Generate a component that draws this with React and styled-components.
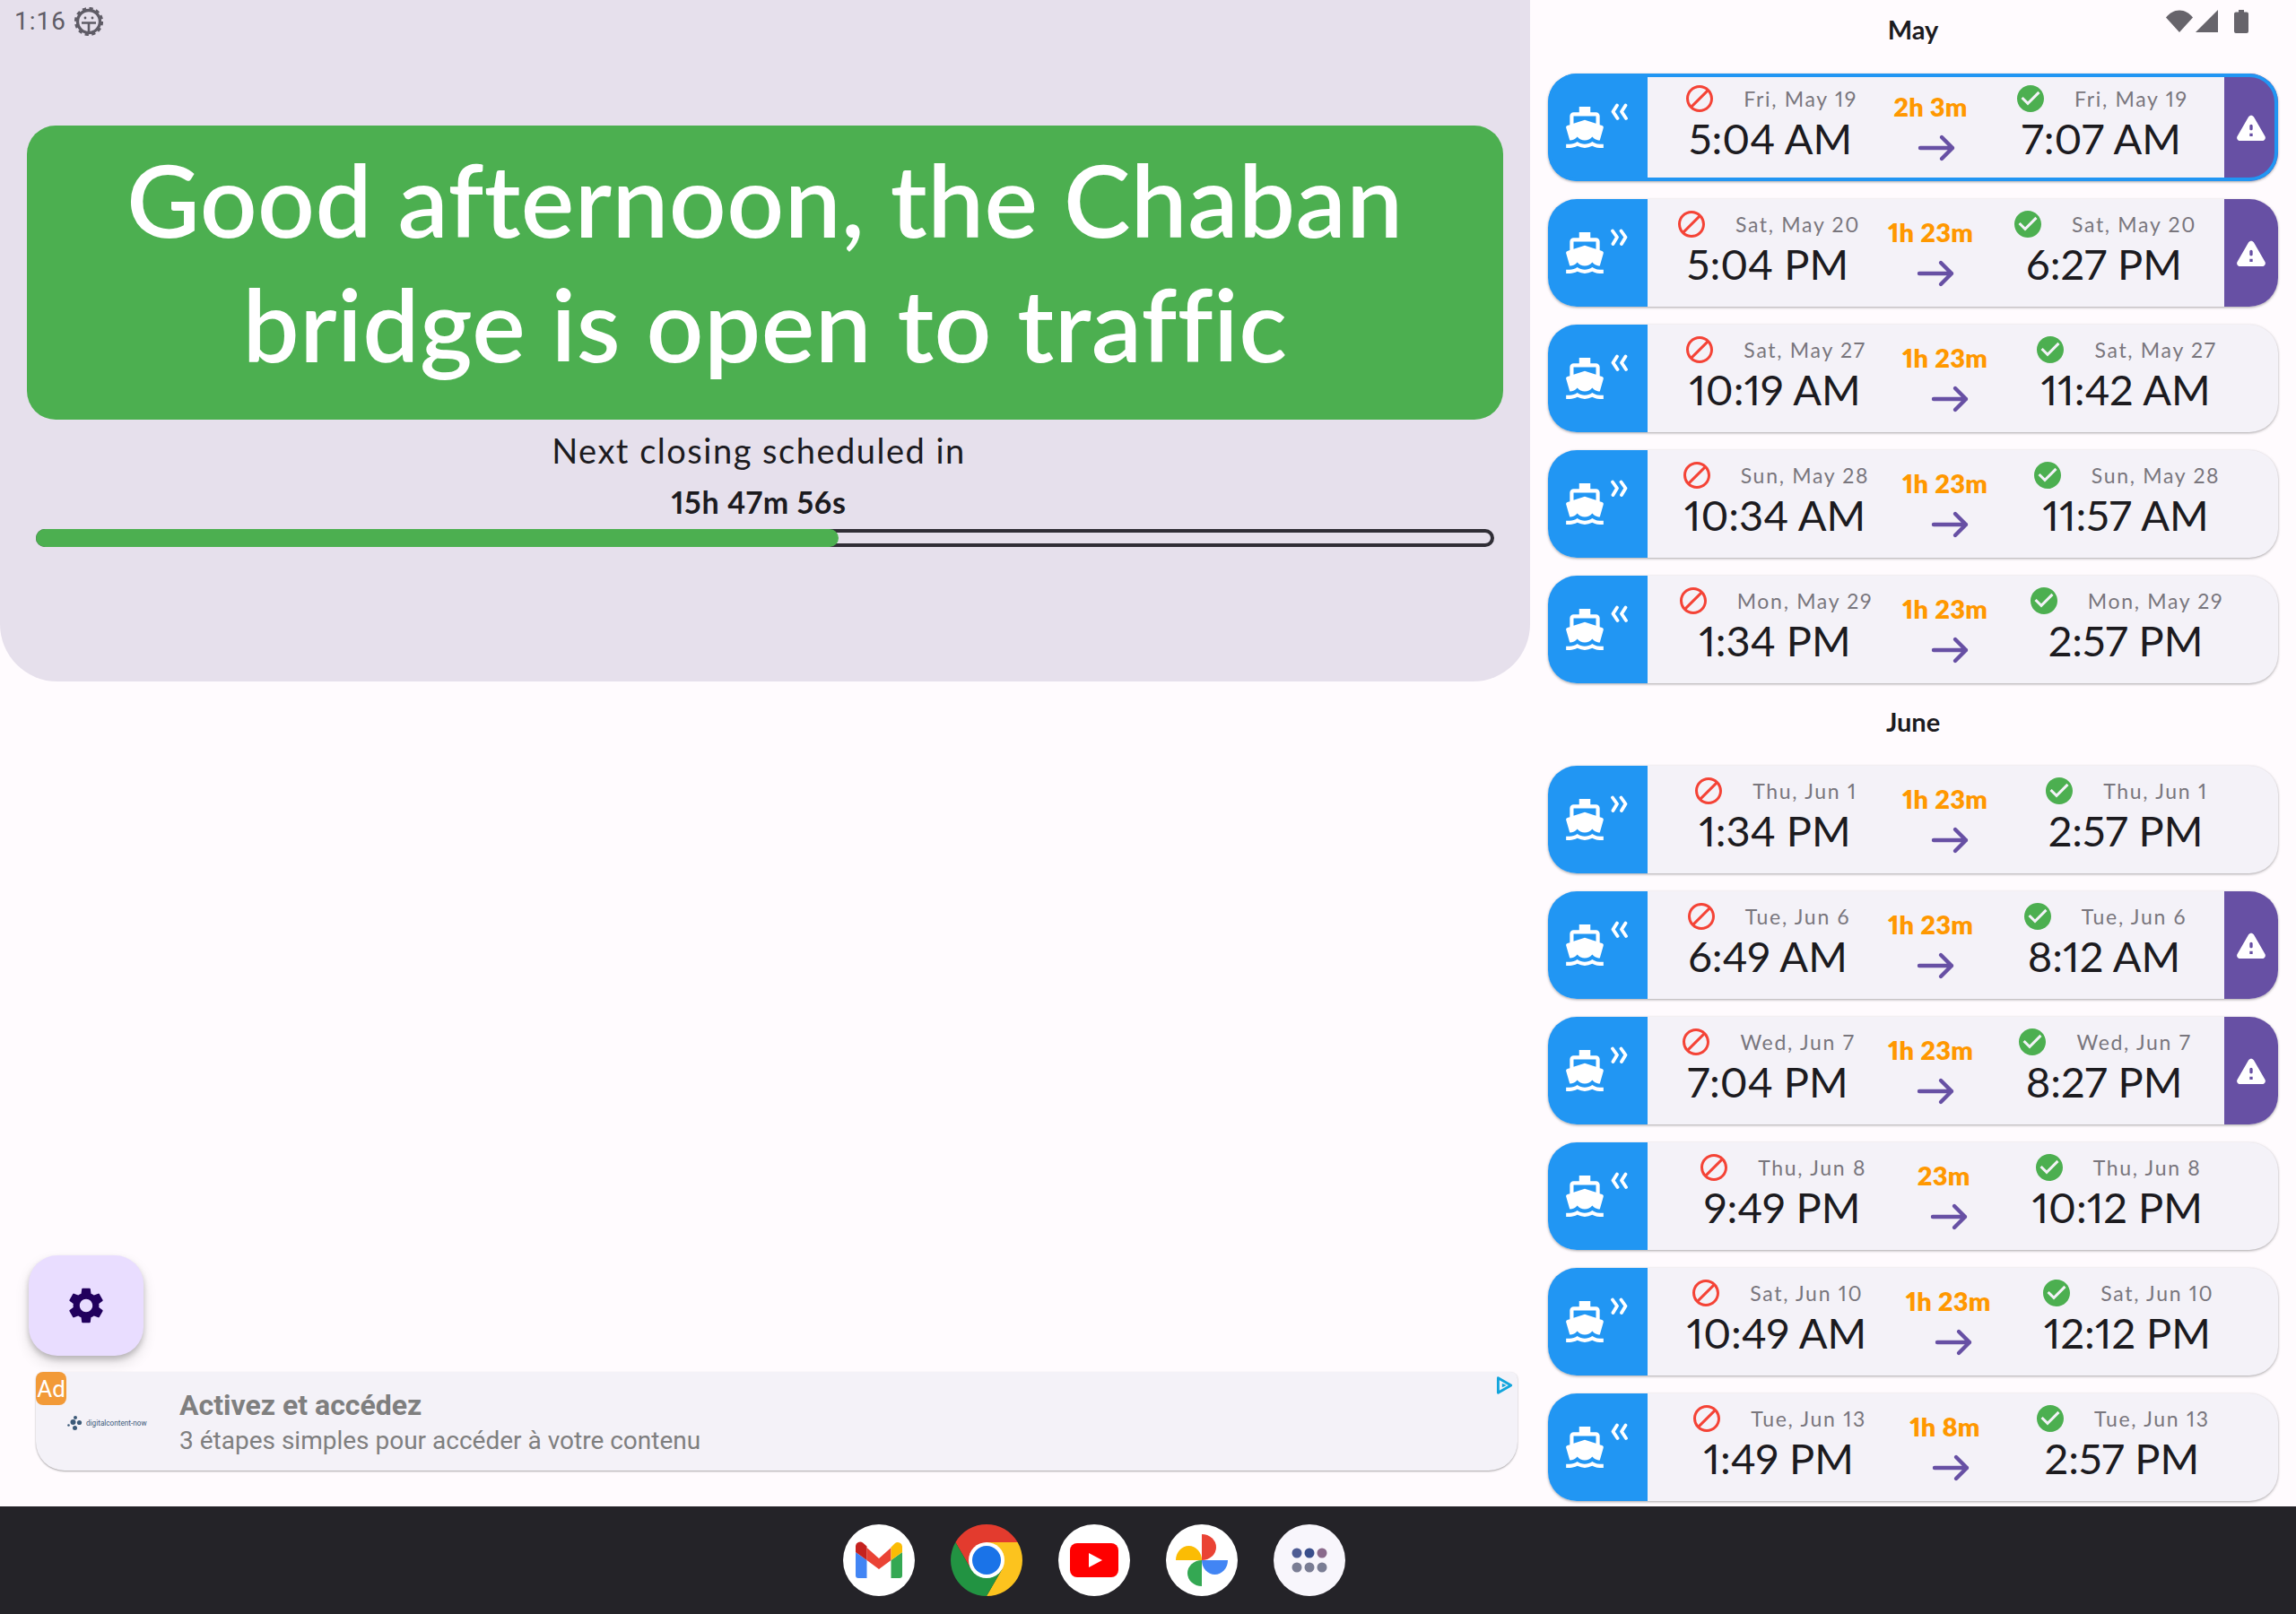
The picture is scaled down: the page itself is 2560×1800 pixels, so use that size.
import React from 'react'
import styled, { createGlobalStyle } from 'styled-components'
import { MdBlock, MdCheckCircle, MdDirectionsBoat, MdSettings } from 'react-icons/md'

const may = [
  { from: 'Fri, May 19', start: '5:04 AM', end: '7:07 AM', length: '2h 3m', dir: 'in', warn: true, selected: true },
  { from: 'Sat, May 20', start: '5:04 PM', end: '6:27 PM', length: '1h 23m', dir: 'out', warn: true },
  { from: 'Sat, May 27', start: '10:19 AM', end: '11:42 AM', length: '1h 23m', dir: 'in' },
  { from: 'Sun, May 28', start: '10:34 AM', end: '11:57 AM', length: '1h 23m', dir: 'out' },
  { from: 'Mon, May 29', start: '1:34 PM', end: '2:57 PM', length: '1h 23m', dir: 'in' },
]

const june = [
  { from: 'Thu, Jun 1', start: '1:34 PM', end: '2:57 PM', length: '1h 23m', dir: 'out' },
  { from: 'Tue, Jun 6', start: '6:49 AM', end: '8:12 AM', length: '1h 23m', dir: 'in', warn: true },
  { from: 'Wed, Jun 7', start: '7:04 PM', end: '8:27 PM', length: '1h 23m', dir: 'out', warn: true },
  { from: 'Thu, Jun 8', start: '9:49 PM', end: '10:12 PM', length: '23m', dir: 'in' },
  { from: 'Sat, Jun 10', start: '10:49 AM', end: '12:12 PM', length: '1h 23m', dir: 'out' },
  { from: 'Tue, Jun 13', start: '1:49 PM', end: '2:57 PM', length: '1h 8m', dir: 'in' },
]

function EastArrow() {
  return (
    <ArrowSvg width="48" height="48" viewBox="0 0 24 24" fill="none" stroke="#6750a4" strokeWidth="2.2" strokeLinecap="round" strokeLinejoin="round">
      <path d="M3 12h18M15 6l6 6-6 6" />
    </ArrowSvg>
  )
}

function WarnTriangle() {
  return (
    <svg width="40" height="40" viewBox="0 0 24 24" fill="#fff">
      <path d="M4.47 21h15.06c1.54 0 2.5-1.67 1.73-3L13.73 4.99c-.77-1.33-2.69-1.33-3.46 0L2.74 18c-.77 1.33.19 3 1.73 3zM12 14c-.55 0-1-.45-1-1v-2c0-.55.45-1 1-1s1 .45 1 1v2c0 .55-.45 1-1 1zm1 4h-2v-2h2v2z" />
    </svg>
  )
}

// the heavy chevrons next to the boat, thicker than the material ones
function Chevrons({ dir }) {
  const d = dir === 'in' ? 'M8 2.5L3.5 9.5 8.5 17M17.5 2.5L13 9.5 18 17' : 'M3 2.5L8 9.5 3.5 17M12.5 2.5L17.5 9.5 13 17'
  return (
    <svg width="22" height="20" viewBox="0 0 22 20" fill="none" stroke="#fff" strokeWidth="3.8" strokeLinecap="round" strokeLinejoin="round">
      <path d={d} />
    </svg>
  )
}

function Sailing({ from, start, end, length, dir, warn, selected }) {
  return (
    <Card $selected={selected}>
      <BoatSide>
        <MdDirectionsBoat size={50} />
        <ChevronSlot>
          <Chevrons dir={dir} />
        </ChevronSlot>
      </BoatSide>
      <Times $warn={warn}>
        <TimeBlock>
          <DateRow>
            <MdBlock size={36} color="#f44336" />
            <DateText>{from}</DateText>
          </DateRow>
          <Clock>{start}</Clock>
        </TimeBlock>
        <Middle>
          <Length>{length}</Length>
          <EastArrow />
        </Middle>
        <TimeBlock>
          <DateRow>
            <MdCheckCircle size={36} color="#4caf50" />
            <DateText>{from}</DateText>
          </DateRow>
          <Clock>{end}</Clock>
        </TimeBlock>
      </Times>
      {warn && (
        <WarnSide>
          <WarnTriangle />
        </WarnSide>
      )}
    </Card>
  )
}

export default function App() {
  return (
    <Screen>
      <Global />
      <StatusBar>
        <StatusLeft>
          <span>1:16</span>
          <svg width="32" height="32" viewBox="0 0 32 32" fill="none" stroke="#5f5c66">
            <circle cx="16" cy="16" r="12.5" strokeWidth="3.4" />
            <circle cx="16" cy="16" r="14.6" strokeWidth="3" strokeDasharray="4.2 3.45" />
            <path d="M8 17.5h16M16 17.5V27" strokeWidth="2.6" />
            <circle cx="12" cy="12" r="1.4" fill="#5f5c66" stroke="none" />
            <circle cx="20" cy="12" r="1.4" fill="#5f5c66" stroke="none" />
          </svg>
        </StatusLeft>
        <StatusRight>
          <svg width="30" height="25" viewBox="0 0 30 25">
            <path d="M0 8.5C4 3.5 9 0.5 15 0.5s11 3 15 8L15 25z" fill="#67646b" />
          </svg>
          <svg width="26" height="25" viewBox="0 0 26 25">
            <path d="M25 0v25H0z" fill="#67646b" />
          </svg>
          <BatteryGap />
          <svg width="16" height="26" viewBox="0 0 16 26">
            <path d="M5 0h6v2.5h3a2 2 0 0 1 2 2V24a2 2 0 0 1-2 2H2a2 2 0 0 1-2-2V4.5a2 2 0 0 1 2-2h3z" fill="#67646b" />
          </svg>
        </StatusRight>
      </StatusBar>

      <Main>
        <LeftColumn>
          <TopPanel>
            <Banner>
              Good afternoon, the Chaban
              <br />
              bridge is open to traffic
            </Banner>
            <NextLabel>Next closing scheduled in</NextLabel>
            <Countdown>15h 47m 56s</Countdown>
            <Track>
              <TrackFill $pct={55.3} />
            </Track>
          </TopPanel>
          <Fab>
            <MdSettings size={48} color="#21005d" />
          </Fab>
          <AdBar>
            <AdBadge>Ad</AdBadge>
            <AdChoice viewBox="0 0 20 20" width="22" height="22">
              <path d="M4 2.5l13 7.5-13 7.5z" fill="none" stroke="#12a5dc" strokeWidth="2.6" strokeLinejoin="round" />
              <path d="M8 8l4.5 2-4.5 2z" fill="#12a5dc" />
            </AdChoice>
            <AdLogo>
              <svg width="18" height="18" viewBox="0 0 18 18" fill="#3c5a78">
                <circle cx="9" cy="3" r="2" />
                <circle cx="6.5" cy="8" r="3" />
                <circle cx="13.5" cy="8.5" r="2.6" />
                <circle cx="8.5" cy="14.5" r="2.5" />
                <circle cx="1.5" cy="11.5" r="1.3" />
              </svg>
              <AdLogoText>digitalcontent-now</AdLogoText>
            </AdLogo>
            <AdCopy>
              <AdTitle>Activez et accédez</AdTitle>
              <AdText>3 étapes simples pour accéder à votre contenu</AdText>
            </AdCopy>
          </AdBar>
        </LeftColumn>

        <RightColumn>
          <MonthHeading>May</MonthHeading>
          <CardList>
            {may.map((s) => (
              <Sailing key={s.from} {...s} />
            ))}
          </CardList>
          <MonthHeading $next>June</MonthHeading>
          <CardList>
            {june.map((s) => (
              <Sailing key={s.from} {...s} />
            ))}
          </CardList>
        </RightColumn>
      </Main>

      <Dock>
        <DockIcon viewBox="0 0 80 80">
          <circle cx="40" cy="40" r="40" fill="#fff" />
          <path d="M14 31v26a3 3 0 0 0 3 3h9.5V40z" fill="#4285f4" />
          <path d="M53.5 40v20H63a3 3 0 0 0 3-3V31z" fill="#34a853" />
          <path d="M26.5 26L40 38l13.5-12v14L40 50 26.5 40z" fill="#ea4335" />
          <path d="M14 31v-7a5 5 0 0 1 8-3.5l4.5 4V40z" fill="#c5221f" />
          <path d="M53.5 25.5l4.5-4.5a5 5 0 0 1 8 3.5V31L53.5 40z" fill="#fbbc04" />
        </DockIcon>
        <DockIcon viewBox="0 0 80 80">
          <path d="M40 20L74.64 20A40 40 0 0 0 5.36 20L22.68 50 40 40z" fill="#e33b2e" />
          <path d="M74.64 20A40 40 0 0 1 40 80L57.32 50 40 40V20z" fill="#fcc31e" />
          <path d="M5.36 20A40 40 0 0 0 40 80L57.32 50 40 40 22.68 50z" fill="#229342" />
          <circle cx="40" cy="40" r="20" fill="#fff" />
          <circle cx="40" cy="40" r="16" fill="#1a73e8" />
        </DockIcon>
        <DockIcon viewBox="0 0 80 80">
          <circle cx="40" cy="40" r="40" fill="#fff" />
          <rect x="13" y="21" width="54" height="38" rx="8" fill="#ff0000" />
          <path d="M34 32l15 8-15 8z" fill="#fff" />
        </DockIcon>
        <DockIcon viewBox="0 0 80 80">
          <circle cx="40" cy="40" r="40" fill="#fff" />
          <path d="M40 11A16 14.5 0 0 1 40 40z" fill="#ea4335" />
          <path d="M69 40A14.5 16 0 0 1 40 40z" fill="#4285f4" />
          <path d="M40 69A16 14.5 0 0 1 40 40z" fill="#34a853" />
          <path d="M11 40A14.5 16 0 0 1 40 40z" fill="#fbbc04" />
        </DockIcon>
        <DockIcon viewBox="0 0 80 80">
          <circle cx="40" cy="40" r="40" fill="#f8f6fc" />
          <circle cx="26" cy="32" r="5.5" fill="#4e5c94" />
          <circle cx="40" cy="32" r="5.5" fill="#3a4f8c" />
          <circle cx="54" cy="32" r="5.5" fill="#8a6a8c" />
          <circle cx="26" cy="48" r="5.5" fill="#7a7d94" />
          <circle cx="40" cy="48" r="5.5" fill="#7a7d94" />
          <circle cx="54" cy="48" r="5.5" fill="#7a7d94" />
        </DockIcon>
      </Dock>
    </Screen>
  )
}

// styled components

const Global = createGlobalStyle`
  body {
    margin: 0;
    background: #fffbfe;
    font-family: "Lato", "Noto Sans", sans-serif;
    font-variant-numeric: proportional-nums;
    color: #1c1b1f;
  }
`

const Screen = styled.div`
  position: relative;
  width: 2560px;
  height: 1800px;
  overflow: hidden;
  display: flex;
  flex-direction: column;
`

const StatusBar = styled.div`
  position: absolute;
  top: 0;
  left: 0;
  right: 0;
  height: 48px;
  display: flex;
  justify-content: space-between;
  align-items: flex-start;
  padding: 8px 53px 0 16px;
`

const StatusLeft = styled.div`
  display: flex;
  align-items: center;
  gap: 9px;
  font-family: "Roboto", sans-serif;
  font-variant-numeric: tabular-nums;
  font-size: 28px;
  line-height: 32px;
  letter-spacing: 1px;
  color: #5f5c66;
`

const StatusRight = styled.div`
  display: flex;
  align-items: flex-start;
  gap: 3px;
  padding-top: 3px;
`

const BatteryGap = styled.div`
  width: 11px;
`

const Main = styled.div`
  flex: 1;
  min-height: 0;
  display: flex;
`

const LeftColumn = styled.div`
  width: 1706px;
  flex: none;
  display: flex;
  flex-direction: column;
  padding-bottom: 40px;
`

const TopPanel = styled.div`
  height: 760px;
  box-sizing: border-box;
  padding: 140px 30px 0;
  background: #e6e0ec;
  border-radius: 0 0 64px 64px;
`

const Banner = styled.div`
  height: 328px;
  box-sizing: border-box;
  padding-top: 12px;
  background: #4caf50;
  border-radius: 32px;
  color: #fff;
  text-align: center;
  font-size: 112px;
  line-height: 139px;
  font-weight: 600;
  letter-spacing: 0.5px;
`

const NextLabel = styled.div`
  margin-top: 10px;
  padding-right: 14px;
  text-align: center;
  font-size: 38px;
  line-height: 48px;
  letter-spacing: 1.5px;
`

const Countdown = styled.div`
  margin-top: 13px;
  padding-right: 14px;
  text-align: center;
  font-size: 34px;
  line-height: 42px;
  font-weight: 700;
  letter-spacing: 0.6px;
`

const Track = styled.div`
  margin: 9px 10px 0;
  height: 20px;
  box-sizing: border-box;
  border: 4px solid #302e36;
  border-radius: 10px;
  position: relative;
`

const TrackFill = styled.div`
  position: absolute;
  top: -4px;
  bottom: -4px;
  left: -4px;
  width: ${(p) => p.$pct}%;
  background: #4caf50;
  border-radius: 10px;
`

const Fab = styled.div`
  width: 128px;
  height: 112px;
  margin: auto 0 0 32px;
  display: flex;
  align-items: center;
  justify-content: center;
  background: #e9ddff;
  border-radius: 32px;
  box-shadow: 0 4px 6px rgba(0, 0, 0, 0.2), 0 8px 16px rgba(0, 0, 0, 0.12);
`

const AdBar = styled.div`
  position: relative;
  height: 110px;
  margin: 18px 14px 0 40px;
  display: flex;
  align-items: center;
  background: #f4f2f8;
  border-radius: 8px 8px 32px 32px;
  box-shadow: 0 1px 2px rgba(0, 0, 0, 0.35);
`

const AdBadge = styled.div`
  position: absolute;
  top: 0;
  left: 0;
  width: 34px;
  height: 37px;
  display: flex;
  align-items: center;
  justify-content: center;
  background: #f29a38;
  border-radius: 8px;
  color: #fff;
  font-family: "Roboto", sans-serif;
  font-size: 26px;
`

const AdChoice = styled.svg`
  position: absolute;
  top: 4px;
  right: 4px;
`

const AdLogo = styled.div`
  width: 160px;
  flex: none;
  box-sizing: border-box;
  padding: 4px 0 0 35px;
  display: flex;
  align-items: center;
  gap: 3px;
`

const AdLogoText = styled.span`
  font-family: "Roboto", sans-serif;
  font-size: 8.2px;
  white-space: nowrap;
  color: #3c5a78;
`

const AdCopy = styled.div`
  display: flex;
  flex-direction: column;
  gap: 4px;
  font-family: "Roboto", sans-serif;
  color: #7f7f7f;
  padding-top: 2px;
`

const AdTitle = styled.div`
  font-size: 32px;
  line-height: 38px;
  font-weight: 700;
`

const AdText = styled.div`
  font-size: 28px;
  line-height: 34px;
`

const RightColumn = styled.div`
  flex: 1;
  box-sizing: border-box;
  padding: 0 20px;
`

const MonthHeading = styled.div`
  height: 64px;
  padding-bottom: 18px;
  margin-top: ${(p) => (p.$next ? '10px' : '0')};
  display: flex;
  align-items: center;
  justify-content: center;
  font-size: 29px;
  font-weight: 700;
`

const CardList = styled.div`
  display: flex;
  flex-direction: column;
  gap: 20px;
`

const Card = styled.div`
  position: relative;
  height: 120px;
  display: flex;
  background: #f4f2f8;
  border-radius: 32px;
  overflow: hidden;
  box-shadow: 0 1px 3px rgba(0, 0, 0, 0.35);

  &::after {
    content: '';
    display: ${(p) => (p.$selected ? 'block' : 'none')};
    position: absolute;
    inset: 0;
    border: 4px solid #2196f3;
    border-radius: 32px;
    pointer-events: none;
  }
`

const BoatSide = styled.div`
  width: 111px;
  flex: none;
  box-sizing: border-box;
  padding-left: 16px;
  display: flex;
  align-items: center;
  background: #2196f3;
  color: #fff;
`

const ChevronSlot = styled.div`
  align-self: flex-start;
  margin: 33px 0 0 3px;
  line-height: 0;
`

const Times = styled.div`
  flex: 1;
  box-sizing: border-box;
  padding-right: ${(p) => (p.$warn ? '0' : '28px')};
  display: flex;
  justify-content: space-evenly;
`

const TimeBlock = styled.div`
  display: flex;
  flex-direction: column;
  align-items: center;
  padding-top: 10px;
`

const DateRow = styled.div`
  display: flex;
  align-items: center;
  gap: 31px;
  height: 36px;
`

const DateText = styled.span`
  font-size: 23px;
  letter-spacing: 1.7px;
  color: #79767d;
`

const Clock = styled.div`
  margin-top: -2px;
  font-size: 47px;
  line-height: 56px;
  white-space: nowrap;
  color: #1c1b1f;
`

const Middle = styled.div`
  display: flex;
  flex-direction: column;
  align-items: center;
  padding: 18px 12px 0 0;
`

const Length = styled.div`
  font-size: 29px;
  line-height: 38px;
  font-weight: 800;
  letter-spacing: 0.2px;
  color: #ff9800;
  margin-bottom: 3px;
`

const ArrowSvg = styled.svg`
  margin-left: 12px;
`

const WarnSide = styled.div`
  width: 60px;
  flex: none;
  display: flex;
  align-items: center;
  justify-content: center;
  background: #6750a4;
  color: #fff;
`

const Dock = styled.div`
  height: 120px;
  flex: none;
  box-sizing: border-box;
  padding-right: 120px;
  display: flex;
  align-items: center;
  justify-content: center;
  gap: 40px;
  background: #242328;
`

const DockIcon = styled.svg`
  width: 80px;
  height: 80px;
`
